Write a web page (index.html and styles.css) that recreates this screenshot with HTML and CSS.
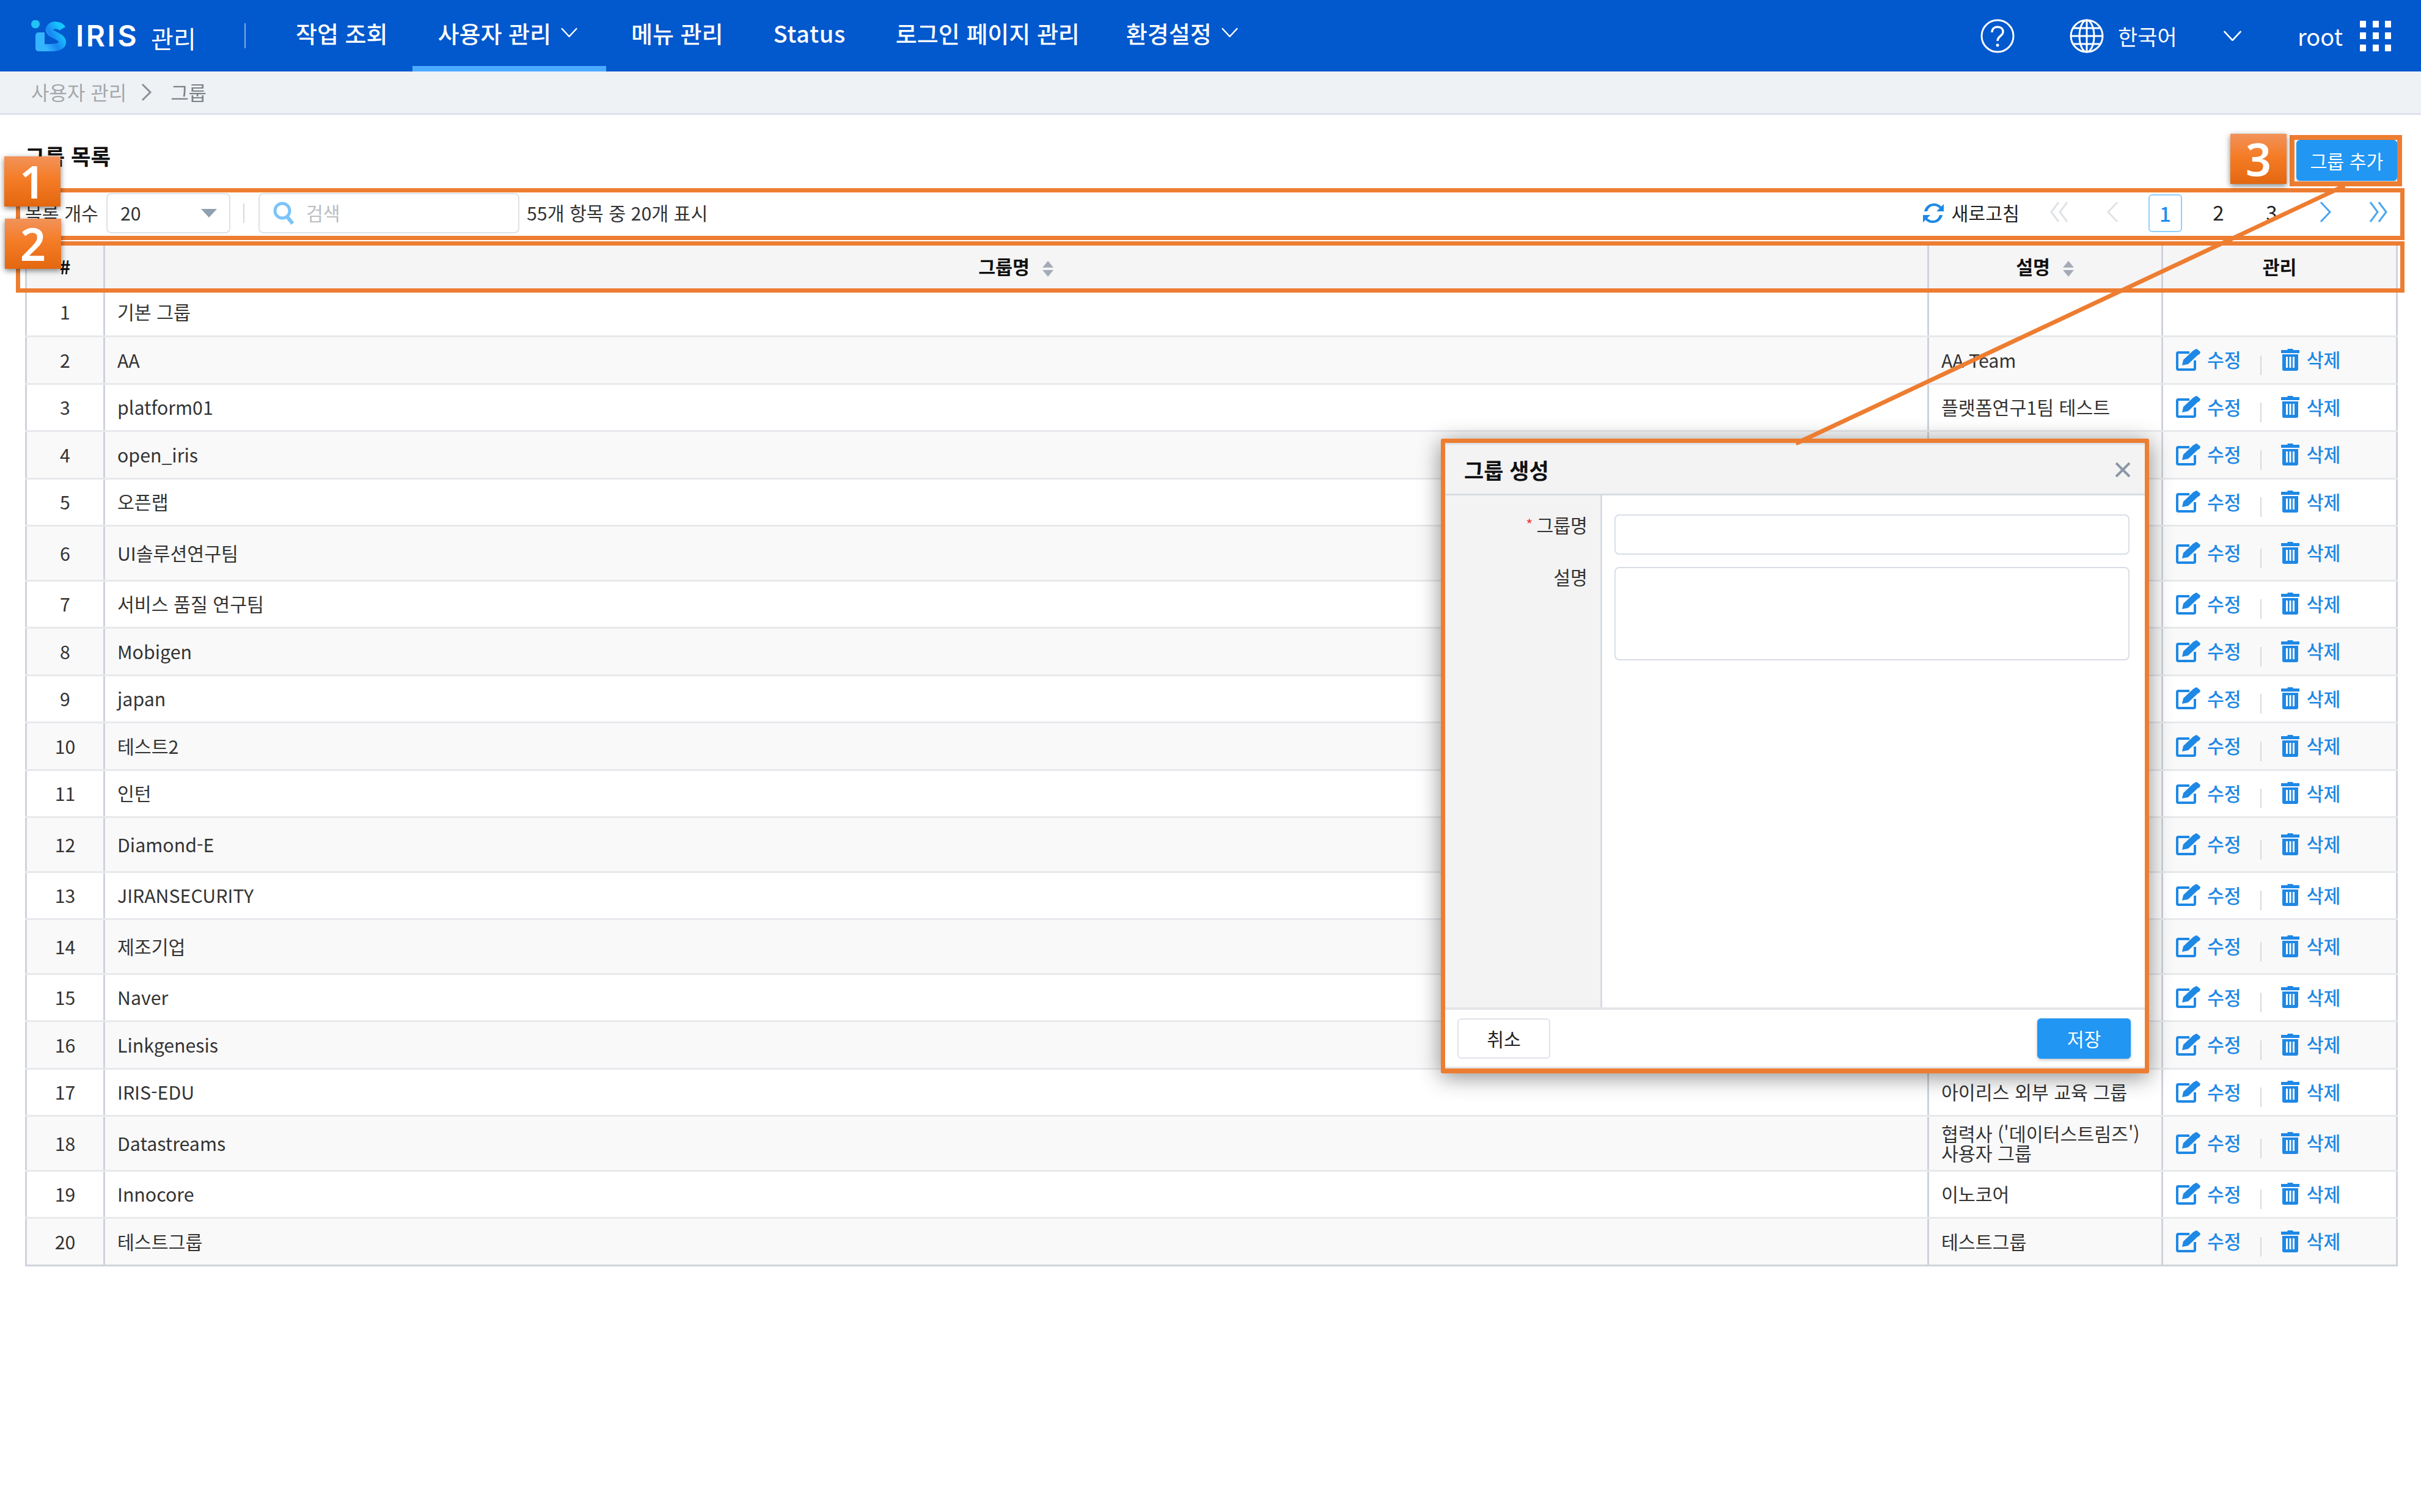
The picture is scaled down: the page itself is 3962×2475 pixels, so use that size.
FILE: index.html
```html
<!DOCTYPE html>
<html lang="ko">
  <head>
    <meta charset="UTF-8">
    <title>그룹 목록</title>
    <link rel="stylesheet" href="styles.css">
  </head>
  <body>

    <svg class="defs" width="0" height="0">
      <defs>
        <symbol id="ico-edit" viewBox="0 0 40 36">
          <path d="M22 6H4a2 2 0 0 0-2 2v24a2 2 0 0 0 2 2h25a2 2 0 0 0 2-2V19" fill="none" stroke="currentColor" stroke-width="4"/>
          <path d="M10 27l2-9L29 2l8 7-17 16z" fill="currentColor"/>
          <path d="M31 1l3-1 6 5-1 3-2 2-8-7z" fill="currentColor"/>
        </symbol>
        <symbol id="ico-trash" viewBox="0 0 30 36">
          <path d="M10 2l1-2h8l1 2h10v5H0V2z" fill="currentColor"/>
          <path d="M2 9h26v24a3 3 0 0 1-3 3H5a3 3 0 0 1-3-3zM8 13v18h3V13zM13.500 13v18h3V13zM19 13v18h3V13z" fill="currentColor" fill-rule="evenodd"/>
        </symbol>
        <symbol id="ico-sort" viewBox="0 0 20 26">
          <path d="M10 0l9 11H1zM10 26L1 15h18z" fill="currentColor"/>
        </symbol>
        <symbol id="ico-down" viewBox="0 0 28 16">
          <path d="M1 1l13 14L27 1" fill="none" stroke="currentColor" stroke-width="2.500"/>
        </symbol>
      </defs>
    </svg>

    <header class="topbar">
      <div class="logo">
        <svg class="logo-mark" viewBox="0 0 57 51">
          <defs>
            <linearGradient id="logo-s" x1="0" y1="1" x2="1" y2="0.3">
              <stop offset="0" stop-color="#35b9ff"/>
              <stop offset="0.5" stop-color="#1b86f2"/>
              <stop offset="1" stop-color="#15c6ff"/>
            </linearGradient>
          </defs>
          <circle cx="7" cy="6.500" r="7" fill="#22c3f5"/>
          <path d="M7 25a5 5 0 0 1 5-5h10v31H12a5 5 0 0 1-5-5z" fill="#35b5ff"/>
          <path d="M51 14C47 7 33 6 30 14c-3 10 21 11 21 22 0 8-12 10-29 9" fill="none" stroke="url(#logo-s)" stroke-width="12"/>
        </svg>
        <span class="logo-name">IRIS</span>
        <span class="logo-sub">관리</span>
      </div>
      <span class="top-divider"></span>
      <nav class="nav">
        <a class="nav-item">작업 조회</a>
        <a class="nav-item active">사용자 관리<svg class="nav-down"><use href="#ico-down"/></svg></a>
        <a class="nav-item">메뉴 관리</a>
        <a class="nav-item nav-latin">Status</a>
        <a class="nav-item nav-tight">로그인 페이지 관리</a>
        <a class="nav-item">환경설정<svg class="nav-down"><use href="#ico-down"/></svg></a>
      </nav>
      <div class="top-right">
        <svg class="top-ico" viewBox="0 0 56 56">
          <circle cx="28" cy="28" r="26" fill="none" stroke="#fff" stroke-width="3"/>
          <path d="M19 22c0-6 4-9 9-9s9 3 9 8c0 7-9 7-9 15" fill="none" stroke="#fff" stroke-width="3.500"/>
          <circle cx="28" cy="43" r="2.500" fill="#fff"/>
        </svg>
        <svg class="top-ico globe" viewBox="0 0 56 56" fill="none" stroke="#fff" stroke-width="3">
          <circle cx="28" cy="28" r="26"/>
          <ellipse cx="28" cy="28" rx="12" ry="26"/>
          <path d="M28 2v52M2 28h52M6 15h44M6 41h44"/>
        </svg>
        <span class="lang">한국어</span>
        <svg class="lang-down"><use href="#ico-down"/></svg>
        <span class="user">root</span>
        <div class="apps">
          <i></i><i></i><i></i><i></i><i></i><i></i><i></i><i></i><i></i>
        </div>
      </div>
    </header>

    <div class="crumbs">
      <span>사용자 관리</span>
      <svg class="crumb-sep" viewBox="0 0 18 30"><path d="M2 2l13 13L2 28" fill="none" stroke="#8c9196" stroke-width="3"/></svg>
      <span class="crumb-now">그룹</span>
    </div>

    <main class="main">
      <div class="title-row">
        <h1 class="title">그룹 목록</h1>
        <button class="btn btn-primary btn-add" type="button">그룹 추가</button>
      </div>

      <div class="toolbar">
        <span class="tool-label">목록 개수</span>
        <div class="select"><span>20</span><i class="caret"></i></div>
        <span class="tool-divider"></span>
        <div class="search">
          <svg class="search-ico" viewBox="0 0 36 38" fill="none" stroke="#7cc4fa">
            <circle cx="15" cy="15" r="12" stroke-width="5"/>
            <path d="M23 25l9 11" stroke-width="6"/>
          </svg>
          <span class="placeholder">검색</span>
        </div>
        <span class="count">55개 항목 중 20개 표시</span>
        <div class="refresh">
          <svg class="refresh-ico" viewBox="0 0 36 36">
            <path d="M3 15C5 6 12 2 19 2c5 0 9 2 12 5l4-4v12H23l5-5c-2-2-5-4-9-4-5 0-9 3-11 9z" fill="#1e88e5"/>
            <path d="M33 21c-2 9-9 13-16 13-5 0-9-2-12-5l-4 4V21h12l-5 5c2 2 5 4 9 4 5 0 9-3 11-9z" fill="#1e88e5"/>
          </svg>
          <span>새로고침</span>
        </div>
        <div class="pager">
          <span class="page off"><svg class="pg-ico" viewBox="0 0 32 36"><path d="M15 2L3 18l12 16M29 2L17 18l12 16"/></svg></span>
          <span class="page off"><svg class="pg-ico" viewBox="0 0 32 36"><path d="M24 2L9 18l15 16"/></svg></span>
          <span class="page current">1</span>
          <span class="page">2</span>
          <span class="page">3</span>
          <span class="page on"><svg class="pg-ico" viewBox="0 0 32 36"><path d="M9 2l15 16L9 34"/></svg></span>
          <span class="page on"><svg class="pg-ico" viewBox="0 0 32 36"><path d="M3 2l12 16L3 34M17 2l12 16-12 16"/></svg></span>
        </div>
      </div>

      <table class="grid">
        <colgroup>
          <col class="col-no"><col><col class="col-desc"><col class="col-act">
        </colgroup>
        <thead>
          <tr>
            <th>#</th>
            <th>그룹명<svg class="sort"><use href="#ico-sort"/></svg></th>
            <th>설명<svg class="sort"><use href="#ico-sort"/></svg></th>
            <th>관리</th>
          </tr>
        </thead>
        <tbody>
          <tr><td>1</td><td>기본 그룹</td><td></td><td></td></tr>
          <tr><td>2</td><td>AA</td><td>AA Team</td><td class="acts"><a><svg class="ico-e"><use href="#ico-edit"/></svg>수정</a><i class="sep"></i><a><svg class="ico-t"><use href="#ico-trash"/></svg>삭제</a></td></tr>
          <tr><td>3</td><td>platform01</td><td>플랫폼연구1팀 테스트</td><td class="acts"><a><svg class="ico-e"><use href="#ico-edit"/></svg>수정</a><i class="sep"></i><a><svg class="ico-t"><use href="#ico-trash"/></svg>삭제</a></td></tr>
          <tr><td>4</td><td>open_iris</td><td></td><td class="acts"><a><svg class="ico-e"><use href="#ico-edit"/></svg>수정</a><i class="sep"></i><a><svg class="ico-t"><use href="#ico-trash"/></svg>삭제</a></td></tr>
          <tr><td>5</td><td>오픈랩</td><td></td><td class="acts"><a><svg class="ico-e"><use href="#ico-edit"/></svg>수정</a><i class="sep"></i><a><svg class="ico-t"><use href="#ico-trash"/></svg>삭제</a></td></tr>
          <tr class="tall"><td>6</td><td>UI솔루션연구팀</td><td></td><td class="acts"><a><svg class="ico-e"><use href="#ico-edit"/></svg>수정</a><i class="sep"></i><a><svg class="ico-t"><use href="#ico-trash"/></svg>삭제</a></td></tr>
          <tr><td>7</td><td>서비스 품질 연구팀</td><td></td><td class="acts"><a><svg class="ico-e"><use href="#ico-edit"/></svg>수정</a><i class="sep"></i><a><svg class="ico-t"><use href="#ico-trash"/></svg>삭제</a></td></tr>
          <tr><td>8</td><td>Mobigen</td><td></td><td class="acts"><a><svg class="ico-e"><use href="#ico-edit"/></svg>수정</a><i class="sep"></i><a><svg class="ico-t"><use href="#ico-trash"/></svg>삭제</a></td></tr>
          <tr><td>9</td><td>japan</td><td></td><td class="acts"><a><svg class="ico-e"><use href="#ico-edit"/></svg>수정</a><i class="sep"></i><a><svg class="ico-t"><use href="#ico-trash"/></svg>삭제</a></td></tr>
          <tr><td>10</td><td>테스트2</td><td></td><td class="acts"><a><svg class="ico-e"><use href="#ico-edit"/></svg>수정</a><i class="sep"></i><a><svg class="ico-t"><use href="#ico-trash"/></svg>삭제</a></td></tr>
          <tr><td>11</td><td>인턴</td><td></td><td class="acts"><a><svg class="ico-e"><use href="#ico-edit"/></svg>수정</a><i class="sep"></i><a><svg class="ico-t"><use href="#ico-trash"/></svg>삭제</a></td></tr>
          <tr class="tall"><td>12</td><td>Diamond-E</td><td></td><td class="acts"><a><svg class="ico-e"><use href="#ico-edit"/></svg>수정</a><i class="sep"></i><a><svg class="ico-t"><use href="#ico-trash"/></svg>삭제</a></td></tr>
          <tr><td>13</td><td>JIRANSECURITY</td><td></td><td class="acts"><a><svg class="ico-e"><use href="#ico-edit"/></svg>수정</a><i class="sep"></i><a><svg class="ico-t"><use href="#ico-trash"/></svg>삭제</a></td></tr>
          <tr class="tall"><td>14</td><td>제조기업</td><td></td><td class="acts"><a><svg class="ico-e"><use href="#ico-edit"/></svg>수정</a><i class="sep"></i><a><svg class="ico-t"><use href="#ico-trash"/></svg>삭제</a></td></tr>
          <tr><td>15</td><td>Naver</td><td></td><td class="acts"><a><svg class="ico-e"><use href="#ico-edit"/></svg>수정</a><i class="sep"></i><a><svg class="ico-t"><use href="#ico-trash"/></svg>삭제</a></td></tr>
          <tr><td>16</td><td>Linkgenesis</td><td></td><td class="acts"><a><svg class="ico-e"><use href="#ico-edit"/></svg>수정</a><i class="sep"></i><a><svg class="ico-t"><use href="#ico-trash"/></svg>삭제</a></td></tr>
          <tr><td>17</td><td>IRIS-EDU</td><td>아이리스 외부 교육 그룹</td><td class="acts"><a><svg class="ico-e"><use href="#ico-edit"/></svg>수정</a><i class="sep"></i><a><svg class="ico-t"><use href="#ico-trash"/></svg>삭제</a></td></tr>
          <tr class="tall"><td>18</td><td>Datastreams</td><td class="wrap">협력사 ('데이터스트림즈') 사용자 그룹</td><td class="acts"><a><svg class="ico-e"><use href="#ico-edit"/></svg>수정</a><i class="sep"></i><a><svg class="ico-t"><use href="#ico-trash"/></svg>삭제</a></td></tr>
          <tr><td>19</td><td>Innocore</td><td>이노코어</td><td class="acts"><a><svg class="ico-e"><use href="#ico-edit"/></svg>수정</a><i class="sep"></i><a><svg class="ico-t"><use href="#ico-trash"/></svg>삭제</a></td></tr>
          <tr><td>20</td><td>테스트그룹</td><td>테스트그룹</td><td class="acts"><a><svg class="ico-e"><use href="#ico-edit"/></svg>수정</a><i class="sep"></i><a><svg class="ico-t"><use href="#ico-trash"/></svg>삭제</a></td></tr>
        </tbody>
      </table>
    </main>

    <!-- dialog, sits over the table -->
    <section class="modal">
      <div class="modal-head">
        <h2 class="modal-title">그룹 생성</h2>
        <svg class="modal-close" viewBox="0 0 28 28"><path d="M3 3l22 22M25 3L3 25" fill="none" stroke="#8a97a5" stroke-width="4"/></svg>
      </div>
      <div class="modal-body">
        <div class="modal-labels">
          <label class="field-label first"><span class="req">*</span>그룹명</label>
          <label class="field-label">설명</label>
        </div>
        <div class="modal-fields">
          <input class="input" type="text">
          <textarea class="input area"></textarea>
        </div>
      </div>
      <div class="modal-foot">
        <button class="btn btn-plain" type="button">취소</button>
        <button class="btn btn-primary btn-save" type="button">저장</button>
      </div>
    </section>

    <!-- annotations drawn on top of the screenshot -->
    <div class="mark mark-1"></div>
    <div class="mark mark-2"></div>
    <div class="mark mark-3"></div>
    <svg class="callout" width="3962" height="800">
      <line x1="3837" y1="304" x2="2939" y2="726" stroke="#ed7d31" stroke-width="7"/>
    </svg>
    <div class="badge badge-1">1</div>
    <div class="badge badge-2">2</div>
    <div class="badge badge-3">3</div>

  </body>
</html>
```

FILE: styles.css
```css
/* Base */
* {
  box-sizing: border-box;
}

html, body {
  margin: 0;
  padding: 0;
}

body {
  position: relative;
  width: 3962px;
  height: 2475px;
  overflow: hidden;
  background: #fff;
  color: #333;
  font-family: "Noto Sans CJK KR", "Noto Sans", sans-serif;
  font-size: 30.3px;
  line-height: 1.3;
}

.defs {
  position: absolute;
}

/* Top bar */
.topbar {
  display: flex;
  align-items: center;
  height: 117px;
  padding-left: 51px;
  background: #0258cd;
  color: #fff;
}

.logo {
  display: flex;
  align-items: center;
  width: 349px;
}

.logo-mark {
  width: 57px;
  height: 51px;
  margin-right: 16px;
}

.logo-name {
  margin-right: 20px;
  font-family: Inter, sans-serif;
  font-size: 48px;
  font-weight: 600;
  letter-spacing: 3.5px;
  line-height: 1;
}

.logo-sub {
  margin-top: 6px;
  font-size: 40px;
}

.top-divider {
  width: 2px;
  height: 41px;
  margin-right: 41px;
  background: rgba(255, 255, 255, 0.5);
}

.nav {
  display: flex;
  align-self: stretch;
}

.nav-item {
  display: flex;
  align-items: center;
  padding: 0 41px;
  border-bottom: 9px solid transparent;
  font-size: 38px;
  font-weight: 500;
}

.nav-item.active {
  border-bottom-color: #4dabff;
}

.nav-latin {
  letter-spacing: 0.7px;
}

.nav-tight {
  padding-right: 35px;
}

.nav-down {
  width: 27px;
  height: 16px;
  margin: -2px 0 0 16px;
}

.active .nav-down {
  margin-right: 6px;
}

.top-right {
  display: flex;
  align-items: center;
  margin-left: auto;
  padding-right: 49px;
}

.top-ico {
  width: 56px;
  height: 56px;
}

.globe {
  margin-left: 90px;
}

.lang {
  width: 172px;
  margin-left: 23px;
  font-size: 35px;
}

.lang-down {
  width: 31px;
  height: 17px;
}

.user {
  margin-left: 91px;
  font-size: 38px;
}

.apps {
  display: grid;
  grid-template-columns: repeat(3, 10px);
  grid-template-rows: repeat(3, 11px);
  gap: 8.500px 10.500px;
  margin-left: 28px;
}

.apps i {
  background: #fff;
}

/* Breadcrumb */
.crumbs {
  display: flex;
  align-items: center;
  height: 71px;
  padding-left: 51px;
  border-bottom: 3px solid #dde3ea;
  background: #eff2f5;
  color: #a3a8ad;
  font-size: 32px;
}

.crumb-sep {
  width: 18px;
  height: 30px;
  margin: 0 30px 0 24px;
}

.crumb-now {
  color: #7d8287;
}

/* Content */
.main {
  padding: 0 40px 0 41px;
}

.title-row {
  display: flex;
  justify-content: space-between;
  align-items: center;
  margin-top: 41px;
  margin-bottom: 20px;
}

.title {
  margin: 0 0 14px;
  color: #111;
  font-size: 35.400px;
  font-weight: 700;
}

.btn {
  border-radius: 6px;
  font-family: inherit;
  font-size: 30.300px;
  cursor: pointer;
}

.btn-primary {
  border: 0;
  background: #2196f3;
  color: #fff;
  box-shadow: 0 2px 5px rgba(0, 0, 0, 0.25);
}

.btn-add {
  width: 165px;
  height: 67px;
  margin-right: -1px;
}

/* Toolbar */
.toolbar {
  display: flex;
  align-items: center;
  height: 66px;
}

.tool-label {
  width: 133px;
}

.select {
  display: flex;
  align-items: center;
  justify-content: space-between;
  width: 203px;
  height: 66px;
  padding: 0 20px 0 21px;
  border: 2px solid #dde2e8;
  border-radius: 8px;
}

.caret {
  width: 0;
  height: 0;
  border-left: 13px solid transparent;
  border-right: 13px solid transparent;
  border-top: 14px solid #8fa0b0;
}

.tool-divider {
  width: 2px;
  height: 32px;
  margin: 0 23px 0 21px;
  background: #d5dae0;
}

.search {
  display: flex;
  align-items: center;
  width: 427px;
  height: 66px;
  padding-left: 22px;
  border: 2px solid #dde2e8;
  border-radius: 8px;
}

.search-ico {
  width: 36px;
  height: 38px;
  margin-right: 18px;
}

.placeholder {
  color: #b9bdc2;
}

.count {
  margin-left: 12px;
}

.refresh {
  display: flex;
  align-items: center;
  margin-left: auto;
  color: #222;
}

.refresh-ico {
  width: 36px;
  height: 36px;
  margin-right: 12px;
}

.pager {
  display: flex;
  align-items: center;
  margin: 0 -13px 0 21px;
}

.page {
  display: flex;
  align-items: center;
  justify-content: center;
  width: 87px;
  height: 62px;
  margin-top: -4px;
  color: #222;
  font-size: 33px;
}

.page.current {
  width: 55px;
  margin: -2px 16px;
  border: 2px solid #90d0ff;
  border-radius: 6px;
  color: #1e8ff0;
  font-weight: 500;
}

.pg-ico {
  width: 32px;
  height: 36px;
  fill: none;
  stroke-width: 3px;
}

.off .pg-ico {
  stroke: #dfe3e7;
}

.on .pg-ico {
  stroke: #4ba6f0;
}

/* Table */
.grid {
  width: 3883px;
  margin-top: 18px;
  border-collapse: collapse;
  table-layout: fixed;
}

.col-no {
  width: 128px;
}

.col-desc {
  width: 383px;
}

.col-act {
  width: 384px;
}

.grid th, .grid td {
  border-left: 3px solid #ced3db;
  border-right: 3px solid #ced3db;
  font-weight: 400;
}

.grid th {
  height: 73px;
  padding: 0;
  background: #f5f5f5;
  color: #111;
  font-weight: 700;
  text-align: center;
}

.grid td {
  padding: 0 20px;
  border-bottom: 3px solid #e7e9ec;
}

.grid td:first-child {
  padding: 0;
  text-align: center;
}

.grid tbody tr {
  height: 77.500px;
}

.grid tbody tr.tall {
  height: 89.500px;
}

.grid tbody tr:nth-child(even) td {
  background: #f9f9f9;
}

.grid tbody tr:last-child td {
  border-bottom-color: #ced3db;
}

.wrap {
  line-height: 32px;
}

.sort {
  width: 20px;
  height: 26px;
  margin-left: 20px;
  color: #a4abb6;
  vertical-align: -4px;
}

.grid td.acts {
  padding: 5px 0 0 21px;
  color: #1e88e5;
  font-weight: 500;
}

.acts a {
  display: inline-flex;
  align-items: center;
}

.ico-e {
  width: 40px;
  height: 36px;
  margin-right: 11px;
}

.ico-t {
  width: 30px;
  height: 36px;
  margin-right: 12px;
}

.sep {
  display: inline-block;
  width: 2px;
  height: 32px;
  margin: 0 32px 0 31px;
  background: #d5dae0;
  vertical-align: -7px;
}

/* Dialog */
.modal {
  position: absolute;
  left: 2358px;
  top: 718px;
  display: flex;
  flex-direction: column;
  width: 1159px;
  height: 1039px;
  border: solid #ed7d31;
  border-width: 7px 7px 8px;
  border-radius: 3px;
  background: #fff;
  box-shadow: 0 6px 36px rgba(0, 0, 0, 0.45);
}

.modal-head {
  display: flex;
  align-items: center;
  justify-content: space-between;
  height: 86px;
  padding: 2px 22px 0 31px;
  border-top: 3px solid #dde1e6;
  border-bottom: 3px solid #d8dce2;
  background: #f3f3f3;
}

.modal-title {
  margin: 0;
  color: #111;
  font-size: 35px;
  font-weight: 700;
}

.modal-close {
  width: 28px;
  height: 28px;
}

.modal-body {
  display: flex;
  flex: 1;
}

.modal-labels {
  width: 257px;
  padding: 29px 21px 0 0;
  border-right: 3px solid #d8dce2;
  background: #f3f3f3;
  text-align: right;
}

.field-label {
  display: block;
  height: 36px;
  line-height: 36px;
}

.field-label.first {
  margin-bottom: 50px;
}

.req {
  margin-right: 6px;
  color: #f03b3b;
  font-size: 24px;
  vertical-align: 4px;
}

.modal-fields {
  display: flex;
  flex: 1;
  flex-direction: column;
  gap: 20px;
  padding: 31px 25px 0 20px;
}

.input {
  display: block;
  width: 100%;
  height: 66px;
  border: 2px solid #d9dee4;
  border-radius: 8px;
  background: #fff;
}

.area {
  height: 153px;
  resize: none;
}

.modal-foot {
  display: flex;
  align-items: center;
  justify-content: space-between;
  height: 100px;
  padding: 0 23px 0 20px;
  border-top: 4px solid #e3e5e8;
  border-bottom: 3px solid #e3e5e8;
}

.btn-plain {
  width: 152px;
  height: 66px;
  border: 2px solid #dfe3e8;
  background: #fff;
  color: #222;
}

.btn-save {
  width: 153px;
  height: 66px;
}

/* Annotations */
.mark {
  position: absolute;
  border: 7px solid #ed7d31;
}

.mark-1 {
  left: 26px;
  top: 308px;
  width: 3909px;
  height: 85px;
}

.mark-2 {
  left: 26px;
  top: 395px;
  width: 3909px;
  height: 84px;
}

.mark-3 {
  left: 3747px;
  top: 221px;
  width: 184px;
  height: 84px;
  border-width: 8px;
}

.callout {
  position: absolute;
  left: 0;
  top: 0;
}

.badge {
  position: absolute;
  display: flex;
  align-items: center;
  justify-content: center;
  width: 92px;
  height: 82px;
  background: linear-gradient(#f2925a, #f57c26 45%, #e3670f);
  box-shadow: 0 3px 9px rgba(0, 0, 0, 0.5);
  color: #fff;
  font-family: "Noto Sans", sans-serif;
  font-size: 74px;
  font-weight: 600;
  line-height: 1;
}

.badge-1 {
  left: 7px;
  top: 256px;
}

.badge-2 {
  left: 8px;
  top: 358px;
}

.badge-3 {
  left: 3650px;
  top: 219px;
}
```
